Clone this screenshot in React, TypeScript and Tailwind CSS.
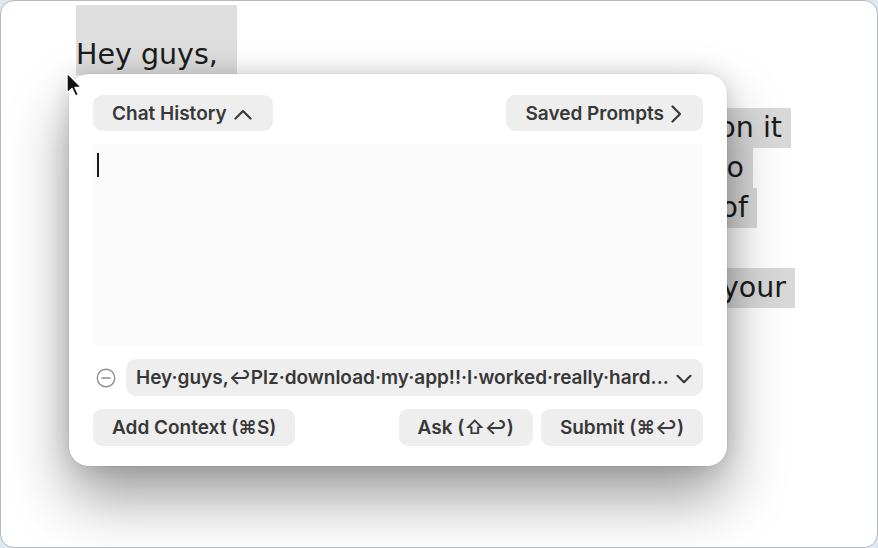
import React from "react";

const ui = { fontFamily: "Inter, 'DejaVu Sans', sans-serif" };
const doc = { fontFamily: "'DejaVu Sans', sans-serif" };

function ChevronUp() {
  return (
    <svg width="18" height="11" viewBox="0 0 18 11" fill="none" stroke="#3a3a3a" strokeWidth="2.2" strokeLinecap="round" strokeLinejoin="round">
      <path d="M1.5 9.5L9 2l7.5 7.5" />
    </svg>
  );
}
function ChevronRight() {
  return (
    <svg width="12" height="18" viewBox="0 0 12 18" fill="none" stroke="#3a3a3a" strokeWidth="2.2" strokeLinecap="round" strokeLinejoin="round">
      <path d="M2.5 1.5L10 9l-7.5 7.5" />
    </svg>
  );
}
function ChevronDown() {
  return (
    <svg width="16" height="10" viewBox="0 0 16 10" fill="none" stroke="#3a3a3a" strokeWidth="2.2" strokeLinecap="round" strokeLinejoin="round">
      <path d="M1.5 1.8L8 8.3l6.5-6.5" />
    </svg>
  );
}

const btn =
  "h-full flex items-center rounded-[9px] bg-[#eeeeee] px-[19px] pt-[2px] text-[19px] font-semibold text-[#383838] whitespace-nowrap";

export default function App() {
  return (
    <div className="w-[878px] h-[548px] bg-[#dfe7f3] overflow-hidden">
      <div className="relative w-full h-full rounded-[14px] border border-[#b4b8c0] bg-white overflow-hidden">
        {/* background document */}
        <div className="pl-[75px] text-[28.5px] text-[#1c1c1c] leading-[40px]" style={doc}>
          <div className="mt-[4px] h-[70px] w-[161px] bg-[#dedede] flex items-end pb-[0px]">Hey guys,</div>
          <div className="mt-[33px] w-[715px] bg-[#d9d9d9] text-right pr-[9px] whitespace-nowrap">on it</div>
          <div className="w-[677px] bg-[#d9d9d9] text-right pr-[9px] whitespace-nowrap">o</div>
          <div className="w-[681px] bg-[#d9d9d9] text-right pr-[9px] whitespace-nowrap">of</div>
          <div className="h-[40px]"></div>
          <div className="w-[719px] bg-[#d9d9d9] text-right pr-[9px] whitespace-nowrap">your</div>
        </div>

        {/* panel overlay */}
        <div
          className="absolute left-[68px] top-[73px] w-[658px] h-[392px] rounded-[20px] bg-white flex flex-col pl-[24px] pr-[24px] pt-[21px] shadow-[0_32px_60px_rgba(0,0,0,0.38),0_0_24px_rgba(0,0,0,0.14),0_0_0_1px_rgba(0,0,0,0.04)]"
          style={ui}
        >
          <div className="h-[36px] flex justify-between">
            <div className={btn + " gap-[7px] pr-[21px]"}>
              Chat History <ChevronUp />
            </div>
            <div className={btn + " gap-[6px] pr-[21px]"}>
              Saved Prompts <ChevronRight />
            </div>
          </div>
          <div className="mt-[13px] h-[201px] bg-[#fafafa] pl-[4px] pt-[9px]">
            <div className="w-[2px] h-[24px] bg-[#1a1a1a]"></div>
          </div>
          <div className="mt-[14px] h-[37px] flex items-center">
            <div className="w-[33px] flex items-center pl-[2px]">
              <svg width="22" height="22" viewBox="0 0 24 24" fill="none" stroke="#8c8c8c" strokeWidth="1.5" strokeLinecap="round">
                <circle cx="12" cy="12" r="9.5" />
                <path d="M7.5 12h9" />
              </svg>
            </div>
            <div className="flex-1 h-full flex items-center justify-between rounded-[10px] bg-[#eeeeee] pl-[10px] pr-[11px] pt-[2px] text-[19px] font-semibold text-[#383838] whitespace-nowrap">
              <span>Hey·guys,↩Plz·download·my·app!!·I·worked·really·hard...</span>
              <ChevronDown />
            </div>
          </div>
          <div className="mt-[13px] h-[37px] flex">
            <div className={btn}>Add Context (⌘S)</div>
            <div className="flex-1"></div>
            <div className={btn}>Ask (⇧↩)</div>
            <div className="w-[8px]"></div>
            <div className={btn}>Submit (⌘↩)</div>
          </div>
        </div>

        {/* mouse pointer */}
        <svg className="absolute left-[64px] top-[70px]" width="20" height="30" viewBox="0 0 20 30">
          <path d="M2 2 L2 22 L7 17.5 L10.5 25 L13.5 23.7 L10 16.5 L16.5 16.5 Z" fill="#111" stroke="#fff" strokeWidth="1.4" strokeLinejoin="round" />
        </svg>
      </div>
    </div>
  );
}
